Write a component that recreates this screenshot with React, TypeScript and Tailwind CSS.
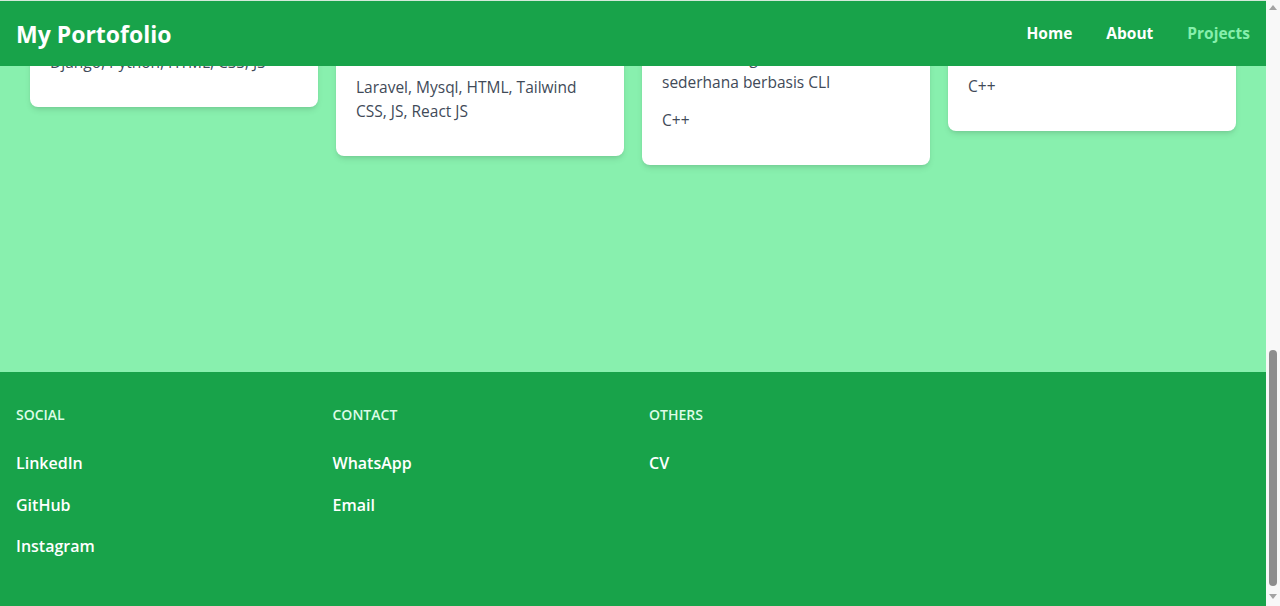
import React, { useLayoutEffect, useRef } from "react";

type Project = {
  title: string;
  titleMb: string;
  desc: string[];
  tech: string[];
};

const projects: Project[] = [
  {
    title: "Sistem Sekolah",
    titleMb: "mb-[22px]",
    desc: ["Website data siswa sekolah"],
    tech: ["Django, Python, HTML, CSS, JS"],
  },
  {
    title: "Toko Online",
    titleMb: "mb-[23px]",
    desc: ["Aplikasi web e-commerce", "dengan fitur keranjang"],
    tech: ["Laravel, Mysql, HTML, Tailwind", "CSS, JS, React JS"],
  },
  {
    title: "Ular Tangga",
    titleMb: "mb-2",
    desc: ["Permainan papan klasik", "untuk dua pemain yang", "mencatat tugas harian", "sederhana berbasis CLI"],
    tech: ["C++"],
  },
  {
    title: "Kalkulator",
    titleMb: "mb-[22px]",
    desc: ["Program kalkulator", "berbasis CLI"],
    tech: ["C++"],
  },
];

function Card({ p }: { p: Project }) {
  return (
    <div className="bg-white rounded-lg shadow-md overflow-hidden">
      <div className="h-40 bg-gray-200" />
      <div className="px-5 pt-5 pb-[33px]">
        <h3 className={`text-xl leading-7 font-bold text-gray-800 whitespace-nowrap ${p.titleMb}`}>{p.title}</h3>
        <p className="text-[15.5px] leading-6 text-[#414a58]">
          {p.desc.map((l, i) => (
            <span key={i} className="block whitespace-nowrap">
              {l}
            </span>
          ))}
        </p>
        <p className="mt-3.5 text-[15.5px] leading-6 text-[#414a58]">
          {p.tech.map((l, i) => (
            <span key={i} className="block whitespace-nowrap">
              {l}
            </span>
          ))}
        </p>
      </div>
    </div>
  );
}

function FooterCol({ title, links }: { title: string; links: string[] }) {
  return (
    <div>
      <h4 className="text-sm leading-5 font-semibold uppercase text-[#dcfce7]">{title}</h4>
      <ul className="mt-6 flex flex-col gap-[13.5px]">
        {links.map((l) => (
          <li key={l} className="text-base leading-7 font-semibold text-white">
            {l}
          </li>
        ))}
      </ul>
    </div>
  );
}

export default function App() {
  const ref = useRef<HTMLDivElement>(null);
  useLayoutEffect(() => {
    if (ref.current) ref.current.scrollTop = ref.current.scrollHeight;
  }, []);

  return (
    <div
      className="h-screen flex overflow-hidden bg-white"
      style={{ fontFamily: '"Open Sans", "Noto Sans", sans-serif' }}
    >
      <div ref={ref} className="flex-1 h-full overflow-y-auto [scrollbar-width:none]">
        <header className="sticky top-0 z-10 h-[66px] bg-[#18a34a] border-t border-[#d4e9da] flex items-center justify-between px-4">
          <h1 className="text-[23px] font-bold text-white pt-0.5">My Portofolio</h1>
          <nav className="flex items-center gap-[34px] text-[15.5px] font-bold">
            <a className="text-white">Home</a>
            <a className="text-white">About</a>
            <a className="text-[#86efac]">Projects</a>
          </nav>
        </header>

        <section className="bg-[#88f0ae] px-[30px] pt-16 pb-[207px]">
          <h2 className="text-3xl font-bold text-gray-800 text-center mb-10">Projects</h2>
          <div className="grid grid-cols-4 gap-[18px] items-start">
            {projects.map((p) => (
              <Card key={p.title} p={p} />
            ))}
          </div>
        </section>

        <footer className="bg-[#18a34a] px-4 pt-[33px] pb-[46px]">
          <div className="grid grid-cols-4 gap-8">
            <FooterCol title="Social" links={["LinkedIn", "GitHub", "Instagram"]} />
            <FooterCol title="Contact" links={["WhatsApp", "Email"]} />
            <FooterCol title="Others" links={["CV"]} />
            <div />
          </div>
        </footer>
      </div>

      <div className="w-[14px] h-full bg-[#f8f8f8] flex flex-col items-center">
        <div className="h-[14px] flex items-center justify-center">
          <svg width="8" height="5" viewBox="0 0 8 5">
            <path d="M4 0 L8 5 L0 5 Z" fill="#a3a3a3" />
          </svg>
        </div>
        <div className="flex-1" />
        <div className="w-2 h-[236px] rounded-full bg-[#8d8d8d]" />
        <div className="h-[20px] flex items-center justify-center">
          <svg width="8" height="5" viewBox="0 0 8 5">
            <path d="M0 0 L8 0 L4 5 Z" fill="#a3a3a3" />
          </svg>
        </div>
      </div>
    </div>
  );
}
